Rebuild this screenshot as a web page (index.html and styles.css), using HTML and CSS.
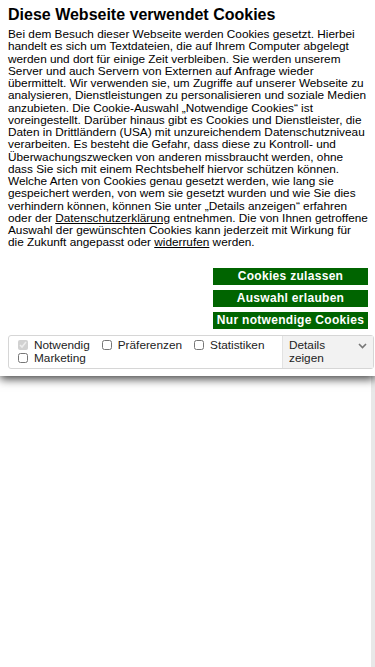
FILE: index.html
```html
<!DOCTYPE html>
<html lang="de">
<head>
  <meta charset="UTF-8">
  <meta name="viewport" content="width=device-width, initial-scale=1.0">
  <title>Cookies</title>
  <link rel="stylesheet" href="styles.css">
</head>
<body>

<div class="page"></div>

<div class="cookie-banner">
  <h2 class="cookie-title">Diese Webseite verwendet Cookies</h2>
  <p class="cookie-text">Bei dem Besuch dieser Webseite werden Cookies gesetzt. Hierbei handelt es sich um Textdateien, die auf Ihrem Computer abgelegt werden und dort für einige Zeit verbleiben. Sie werden unserem Server und auch Servern von Externen auf Anfrage wieder übermittelt. Wir verwenden sie, um Zugriffe auf unserer Webseite zu analysieren, Dienstleistungen zu personalisieren und soziale Medien anzubieten. Die Cookie-Auswahl „Notwendige Cookies“ ist voreingestellt. Darüber hinaus gibt es Cookies und Dienstleister, die Daten in Drittländern (USA) mit unzureichendem Datenschutzniveau verarbeiten. Es besteht die Gefahr, dass diese zu Kontroll- und Überwachungszwecken von anderen missbraucht werden, ohne dass Sie sich mit einem Rechtsbehelf hiervor schützen können. Welche Arten von Cookies genau gesetzt werden, wie lang sie gespeichert werden, von wem sie gesetzt wurden und wie Sie dies verhindern können, können Sie unter „Details anzeigen“ erfahren oder der <a href="#">Datenschutzerklärung</a> entnehmen. Die von Ihnen getroffene Auswahl der gewünschten Cookies kann jederzeit mit Wirkung für die Zukunft angepasst oder <a href="#">widerrufen</a> werden.</p>

  <div class="cookie-buttons">
    <button class="cookie-btn">Cookies zulassen</button>
    <button class="cookie-btn">Auswahl erlauben</button>
    <button class="cookie-btn">Nur notwendige Cookies</button>
  </div>

  <div class="cookie-panel">
    <div class="cookie-options">
      <label class="option"><input type="checkbox" checked disabled> Notwendig</label>
      <label class="option"><input type="checkbox"> Präferenzen</label>
      <label class="option"><input type="checkbox"> Statistiken</label>
      <label class="option"><input type="checkbox"> Marketing</label>
    </div>
    <div class="details">
      <span>Details zeigen</span>
      <svg class="chevron" width="9" height="6" viewBox="0 0 9 6"><path d="M1 1l3.5 3.5L8 1" fill="none" stroke="#777" stroke-width="1.6"/></svg>
    </div>
  </div>
</div>

</body>
</html>
```

FILE: styles.css
```css
* {
  box-sizing: border-box;
}
body {
  margin: 0;
  font-family: "Liberation Sans", Arial, sans-serif;
  background-color: #fff;
  color: #000;
  height: 667px;
  overflow: hidden;
  position: relative;
}
.page {
  position: absolute;
  top: 0;
  right: 0;
  width: 4px;
  height: 667px;
  background-color: #e8e8e8;
}
.cookie-banner {
  position: relative;
  z-index: 2;
  background-color: #fff;
  padding: 6px 1px 7px 8px;
  box-shadow: 0 3px 9px rgba(0, 0, 0, 0.75);
}
.cookie-title {
  margin: 0;
  font-size: 16px;
  line-height: 18px;
  font-weight: bold;
}
.cookie-text {
  margin: 4px 5px 0 0;
  font-size: 11.8px;
  line-height: 12.25px;
}
.cookie-text a {
  color: #000;
}
.cookie-buttons {
  display: flex;
  flex-direction: column;
  align-items: flex-end;
  gap: 5px;
  margin: 19px 6px 0 0;
}
.cookie-btn {
  width: 155px;
  height: 17px;
  padding: 0;
  border: none;
  background-color: #006400;
  color: #fff;
  font-family: inherit;
  font-size: 12px;
  font-weight: bold;
  letter-spacing: 0.3px;
}
.cookie-panel {
  display: flex;
  margin-top: 6px;
  border: 1px solid #d6d6d6;
  border-radius: 3px;
  font-size: 11.8px;
  line-height: 13px;
}
.cookie-options {
  flex: 1;
  display: flex;
  flex-wrap: wrap;
  column-gap: 12px;
  padding: 3px 0 3px 9px;
}
.option {
  display: flex;
  align-items: center;
  color: #222;
}
.option input {
  margin: 0 6px 0 0;
  width: 10px;
  height: 10px;
}
.details {
  width: 91px;
  display: flex;
  align-items: flex-start;
  justify-content: space-between;
  padding: 3px 6px 3px 6px;
  background-color: #f2f2f2;
  border-left: 1px solid #e2e2e2;
  color: #222;
}
.details span {
  width: 50px;
}
.chevron {
  margin-top: 4px;
}
```
